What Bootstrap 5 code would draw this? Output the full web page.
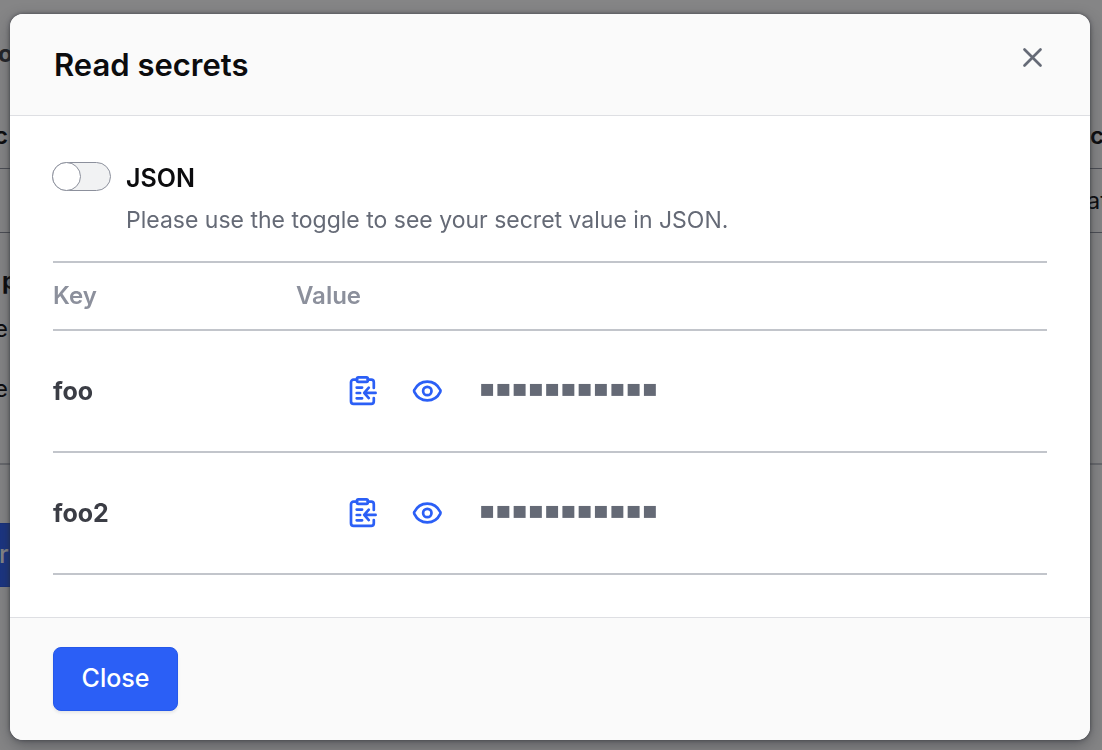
<!DOCTYPE html>
<html lang="en">
<head>
<meta charset="utf-8">
<meta name="viewport" content="width=device-width, initial-scale=1">
<title>Read secrets</title>
<link href="https://cdn.jsdelivr.net/npm/bootstrap@5.3.0/dist/css/bootstrap.min.css" rel="stylesheet">
<style>
  body { font-family: Inter, "Liberation Sans", sans-serif; color: #0c0c0e; font-size: 24px; line-height: 32px; background: #fff; height: 100vh; overflow: hidden; }

  /* page under the dialog */
  .page { margin: 0 -6px; }
  .page-title { padding: 38px 0 0 4px; height: 120px; color: #3b3d45; }
  .page-row { height: 64px; padding-top: 16px; border-bottom: 1px solid #8c909c; }
  .page-head { height: 49px; padding: 0 4px 0 0; }
  .page-section { height: 232px; padding-top: 32px; border-bottom: 2px solid #c2c5cb; }
  .page-btn { height: 64px; margin-top: 58px; padding: 0 4px; border-radius: 0; }
  .btn-action { --bs-btn-bg: #2b5ff6; --bs-btn-border-color: #2558ea; --bs-btn-color: #fff; --bs-btn-hover-bg: #1f50de; --bs-btn-hover-color: #fff; font-size: 25px; font-weight: 500; }

  .modal-dialog { max-width: none; margin: 14px 12px 10px 10px; }
  .modal-content { border: 0; border-radius: 13px; overflow: hidden; box-shadow: 0 0 4px rgba(40,42,50,.7), 0 6px 16px rgba(40,42,50,.4); }
  .modal-backdrop { --bs-backdrop-opacity: .5; --bs-backdrop-bg: #0c0c0e; }
  .modal-header, .modal-footer { background: #fafafa; border-color: #dedfe3; border-radius: 0; }
  .modal-header { height: 102px; padding: 0 44px; }
  .modal-title { font-size: 31px; line-height: 40px; font-weight: 600; }
  .btn-dismiss { line-height: 0; margin-top: 28px; color: #656a76; }
  .modal-body { padding: 46px 43px 42px; }

  .toggle-row { gap: 15px; padding-left: 0; min-height: 0; margin: 0 0 25px -1px; }
  .toggle-row .form-check-input { flex: none; width: 59px; height: 29px; margin: 0; border: 1px solid #8c909c; border-radius: 15px; background: #f1f2f3; }
  .toggle-row .form-check-input::before { content: ""; display: block; width: 29px; height: 29px; margin: -1px; border: 1px solid #8c909c; border-radius: 50%; background: #fff; }
  .toggle-row .form-check-input:checked { background: #2b5ff6; }
  .toggle-row .form-check-input:checked::before { margin-left: 29px; }
  .toggle-label { font-size: 25px; font-weight: 600; }
  .toggle-help { color: #656a76; font-size: 23px; margin-top: 10px; }

  .secrets { table-layout: fixed; margin: 0; border-top: 2px solid #c2c5cb; --bs-table-bg: transparent; }
  .secrets th, .secrets td { padding: 0; border-bottom: 2px solid #c2c5cb; vertical-align: middle; }
  .secrets thead th { height: 68px; font-weight: 600; color: #8c909c; }
  .secrets tbody th { height: 122px; font-size: 25px; font-weight: 700; color: #3b3d45; }
  .secrets .key-col { width: 243px; }
  .secrets .value-cell { padding-left: 51px; }
  .icon-btn { line-height: 0; color: #2b5ff6; }
  .masked { color: #656a76; font-family: "DejaVu Sans", sans-serif; font-size: 24px; line-height: 32px; margin-left: 12px; padding-bottom: 6px; }

  .modal-footer { padding: 29px 43px; }
  .btn-close-dialog { width: 125px; height: 64px; margin: 0; border-radius: 8px; box-shadow: 0 2px 3px rgba(60,64,76,.1); }
</style>
</head>
<body>

<main class="page">
  <div class="page-title fw-bold">o</div>
  <div class="page-row page-head fw-semibold d-flex justify-content-between"><span>c</span><span>c</span></div>
  <div class="page-row d-flex justify-content-end">at</div>
  <section class="page-section">
    <div class="fw-bold ps-2">p</div>
    <div class="mt-3">e</div>
    <div class="mt-4 pt-1">e</div>
  </section>
  <button type="button" class="btn btn-action page-btn">r</button>
</main>

<div class="modal-backdrop show"></div>
<div class="modal d-block" role="dialog" aria-modal="true" aria-labelledby="dialogTitle">
  <div class="modal-dialog">
    <div class="modal-content">
      <div class="modal-header align-items-center">
        <h1 class="modal-title" id="dialogTitle">Read secrets</h1>
        <button type="button" class="btn-dismiss btn p-0 border-0 align-self-start" aria-label="Dismiss">
          <svg width="28" height="32" viewBox="0 0 28 32" fill="none" stroke="currentColor" stroke-width="2.7" stroke-linecap="round"><path d="M6.500 7.500 22.500 23.500M22.500 7.500 6.500 23.500"/></svg>
        </button>
      </div>

      <div class="modal-body">
        <div class="toggle-row form-check form-switch d-flex align-items-start">
          <input class="form-check-input" type="checkbox" role="switch" id="jsonToggle" aria-describedby="jsonHelp">
          <div>
            <label class="toggle-label d-block" for="jsonToggle">JSON</label>
            <div class="toggle-help" id="jsonHelp">Please use the toggle to see your secret value in JSON.</div>
          </div>
        </div>

        <table class="secrets table">
          <thead>
            <tr><th class="key-col" scope="col">Key</th><th scope="col">Value</th></tr>
          </thead>
          <tbody>
            <tr>
              <th scope="row">foo</th>
              <td class="value-cell"><div class="d-flex align-items-center">
                <button type="button" class="icon-btn btn p-0 border-0 me-4" aria-label="Copy foo"><svg width="32" height="32"><use href="#copy"/></svg></button>
                <button type="button" class="icon-btn btn p-0 border-0 ms-2 me-4" aria-label="Show foo"><svg width="32" height="32"><use href="#eye"/></svg></button>
                <span class="masked">▪▪▪▪▪▪▪▪▪▪▪</span>
              </div></td>
            </tr>
            <tr>
              <th scope="row">foo2</th>
              <td class="value-cell"><div class="d-flex align-items-center">
                <button type="button" class="icon-btn btn p-0 border-0 me-4" aria-label="Copy foo2"><svg width="32" height="32"><use href="#copy"/></svg></button>
                <button type="button" class="icon-btn btn p-0 border-0 ms-2 me-4" aria-label="Show foo2"><svg width="32" height="32"><use href="#eye"/></svg></button>
                <span class="masked">▪▪▪▪▪▪▪▪▪▪▪</span>
              </div></td>
            </tr>
          </tbody>
        </table>
      </div>

      <div class="modal-footer justify-content-start">
        <button type="button" class="btn btn-action btn-close-dialog">Close</button>
      </div>
    </div>
  </div>
</div>

<svg class="d-none">
  <symbol id="copy" viewBox="0 0 32 32">
    <g fill="none" stroke="currentColor" stroke-width="2.7" stroke-linecap="round" stroke-linejoin="round">
      <path d="M10 4.600H6.600a2.600 2.600 0 0 0-2.600 2.600v19a2.600 2.600 0 0 0 2.600 2.600h17.600a2.600 2.600 0 0 0 2.600-2.600V23M20.800 4.600h3.400a2.600 2.600 0 0 1 2.600 2.600V13"/>
      <rect x="10" y="2.300" width="10.800" height="4.600" rx="1.300"/>
      <path d="M9.700 12.600h5.400M9.700 18h3.400M9.700 23.300h5.400M21.800 12.700 17.200 17.900l4.600 5.200M17.600 17.900H28.600"/>
    </g>
  </symbol>
  <symbol id="eye" viewBox="0 0 32 32">
    <g fill="none" stroke="currentColor" stroke-width="2.7" stroke-linejoin="round">
      <path d="M3.300 16.900a2 2 0 0 1 0-1.900C5.800 10 10.600 6.600 16.300 6.600S26.800 10 29.300 15a2 2 0 0 1 0 1.900C26.800 22 22 25.400 16.300 25.400S5.800 22 3.300 16.900Z"/>
      <circle cx="16.300" cy="16" r="4.200"/>
    </g>
  </symbol>
</svg>

<script src="https://cdn.jsdelivr.net/npm/bootstrap@5.3.0/dist/js/bootstrap.bundle.min.js"></script>
</body>
</html>
